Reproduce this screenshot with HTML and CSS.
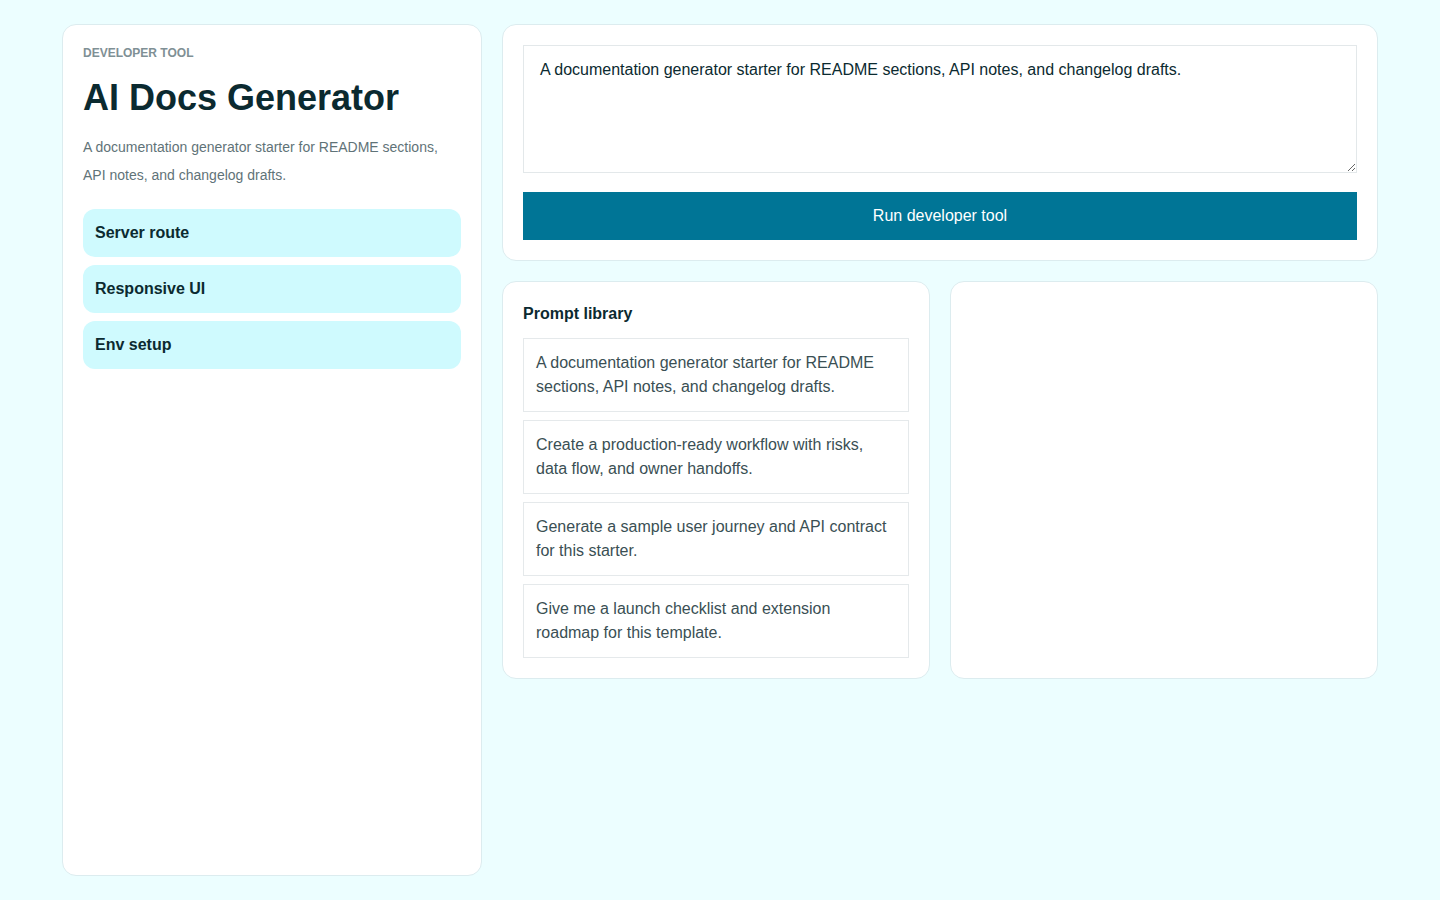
FILE: index.html
```html
<!DOCTYPE html>
<html lang="en">
<head>
  <meta charset="UTF-8">
  <meta name="viewport" content="width=device-width, initial-scale=1.0">
  <title>AI Docs Generator</title>
  <link rel="stylesheet" href="styles.css">
</head>
<body>
  <div class="app">
    <!-- Sidebar -->
    <aside class="card sidebar">
      <p class="eyebrow">Developer tool</p>
      <h1>AI Docs Generator</h1>
      <p class="intro">A documentation generator starter for README sections, API notes, and changelog drafts.</p>
      <nav class="nav">
        <button class="nav-item">Server route</button>
        <button class="nav-item">Responsive UI</button>
        <button class="nav-item">Env setup</button>
      </nav>
    </aside>

    <main class="main">
      <!-- Prompt input -->
      <section class="card composer">
        <textarea class="prompt-input">A documentation generator starter for README sections, API notes, and changelog drafts.</textarea>
        <button class="run-btn">Run developer tool</button>
      </section>

      <div class="panels">
        <section class="card library">
          <h3>Prompt library</h3>
          <div class="prompt-list">
            <div class="prompt">A documentation generator starter for README sections, API notes, and changelog drafts.</div>
            <div class="prompt">Create a production-ready workflow with risks, data flow, and owner handoffs.</div>
            <div class="prompt">Generate a sample user journey and API contract for this starter.</div>
            <div class="prompt">Give me a launch checklist and extension roadmap for this template.</div>
          </div>
        </section>
        <section class="card output"></section>
      </div>
    </main>
  </div>
</body>
</html>
```

FILE: styles.css
```css
/* Light cyan developer theme */
* {
  box-sizing: border-box;
}

body {
  margin: 0;
  font-family: "Liberation Sans", Arial, sans-serif;
  background-color: #ecfeff;
  color: #0b2a30;
}

.app {
  display: grid;
  grid-template-columns: 420px 1fr;
  gap: 20px;
  max-width: 1316px;
  min-height: 100vh;
  margin: 0 auto;
  padding: 24px 0;
}

.card {
  background: #fff;
  border: 1px solid #dcecef;
  border-radius: 14px;
  padding: 20px;
}

/* Sidebar */
.eyebrow {
  margin: 0;
  padding-top: 1px;
  font-size: 12px;
  font-weight: bold;
  text-transform: uppercase;
  color: #7f9095;
}

h1 {
  margin: 16px 0 14px;
  font-size: 36px;
  line-height: 1.2;
  color: #0b2a30;
}

.intro {
  margin: 0;
  font-size: 14px;
  line-height: 28px;
  color: #5f7378;
}

.nav {
  display: flex;
  flex-direction: column;
  gap: 8px;
  margin-top: 20px;
}

.nav-item {
  height: 48px;
  padding: 0 12px;
  border: none;
  border-radius: 12px;
  background: #cffafe;
  color: #0b2a30;
  font-family: inherit;
  font-size: 16px;
  font-weight: bold;
  text-align: left;
  cursor: pointer;
}

/* Main column */
.main {
  display: flex;
  flex-direction: column;
  gap: 20px;
}

.composer {
  display: flex;
  flex-direction: column;
  gap: 19px;
}

.prompt-input {
  display: block;
  width: 100%;
  height: 128px;
  padding: 13px 16px 11px;
  border: 1px solid #e3e8ea;
  font-family: inherit;
  font-size: 16px;
  line-height: 1.4;
  color: #0b2a30;
  resize: vertical;
}

.run-btn {
  height: 48px;
  border: none;
  background: #007596;
  color: #fff;
  font-family: inherit;
  font-size: 16px;
  cursor: pointer;
}

.panels {
  display: grid;
  grid-template-columns: 1fr 1fr;
  gap: 20px;
}

.library h3 {
  margin: 0 0 12px;
  font-size: 16px;
  line-height: 24px;
  color: #0b2a30;
}

.prompt-list {
  display: flex;
  flex-direction: column;
  gap: 8px;
}

.prompt {
  padding: 12px;
  border: 1px solid #e5e9eb;
  font-size: 16px;
  line-height: 24px;
  color: #3a4f54;
}
```
